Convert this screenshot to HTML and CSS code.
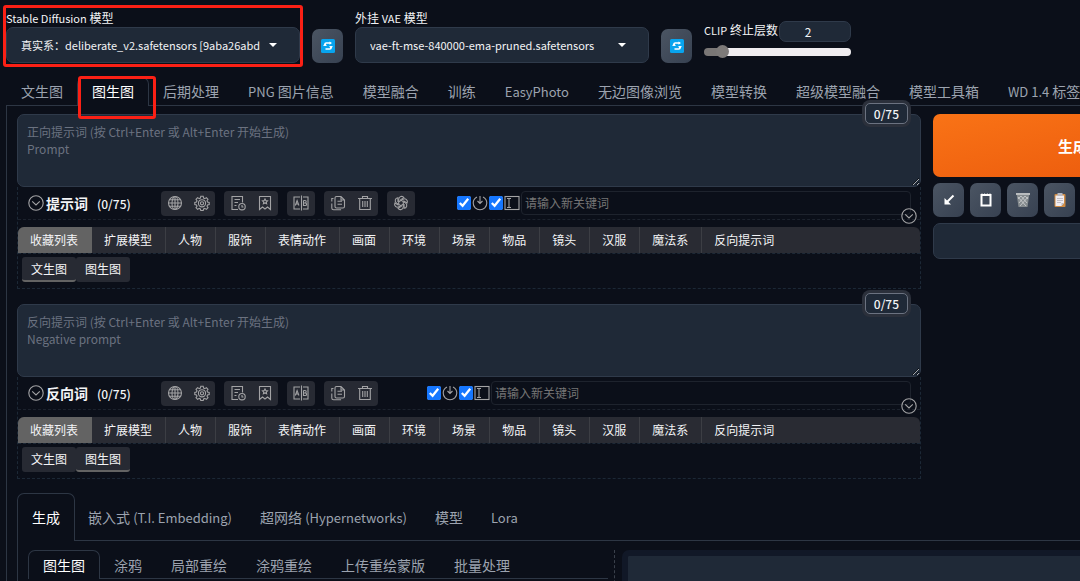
FILE: index.html
```html
<!DOCTYPE html>
<html lang="zh-CN">
<head>
  <meta charset="utf-8">
  <title>Stable Diffusion</title>
  <link rel="stylesheet" href="styles.css">
</head>
<body>
  <!-- shared icons -->
  <svg class="sprite" aria-hidden="true">
    <symbol id="i-refresh" viewBox="0 0 14 14">
      <rect width="14" height="14" rx="1.5" fill="#08a4ee"/>
      <path d="M4 7V5.2Q4 4 5.2 4H9.5M10 7v1.800Q10 10 8.800 10H4.500" fill="none" stroke="#fff" stroke-width="1.600"/>
      <path d="M2 6.800h4L4 4.300zM12 7.200H8l2 2.500zM8.500 2.500v3.200L11 4z" fill="#fff"/>
    </symbol>
    <symbol id="i-chevron" viewBox="0 0 16 16">
      <circle cx="8" cy="8" r="7.200"/><path d="M4.200 6.400 8 10l3.800-3.600"/>
    </symbol>
    <symbol id="i-globe" viewBox="0 0 16 16">
      <circle cx="8" cy="8" r="6.500"/><ellipse cx="8" cy="8" rx="3" ry="6.500"/><path d="M8 1.500v13M1.500 8h13M2.500 4.700h11M2.500 11.300h11"/>
    </symbol>
    <symbol id="i-gear" viewBox="0 0 16 16">
      <path d="M6.800 1.300h2.400l.4 1.800 1.200.5 1.600-1 1.600 1.700-1 1.500.5 1.200 1.700.4v2.200l-1.700.4-.5 1.200 1 1.500-1.600 1.700-1.600-1-1.200.5-.4 1.700H6.800l-.4-1.700-1.200-.5-1.600 1L2 12.700l1-1.500-.5-1.200-1.700-.4V7.400L2.500 7 3 5.800 2 4.300l1.600-1.700 1.600 1 1.200-.5z"/><circle cx="8" cy="8.300" r="3.600"/><circle cx="8" cy="8.300" r="1.600"/>
    </symbol>
    <symbol id="i-history" viewBox="0 0 16 16">
      <path d="M12.500 7.500V1.500H2v13h6M4.500 4.500H10M4.500 7.500H8M4.500 10.500h2"/><circle cx="12" cy="11.700" r="3.200"/><path d="M12 10v2h1.500"/>
    </symbol>
    <symbol id="i-bookmark" viewBox="0 0 16 16">
      <path d="M2.500 1.500h11v13L10.500 12 8 14l-2.500-2-3 2.500z"/><path d="m8 4 .8 1.600 1.700.2-1.300 1.200.4 1.700L8 7.900l-1.600.8.400-1.700-1.300-1.200 1.700-.2z"/>
    </symbol>
    <symbol id="i-translate" viewBox="0 0 16 16">
      <path d="M7 2H1v12h6M8.500 .5v15M10 2h5v12h-5" /><path d="m2.300 10.500 1.800-5 1.800 5M3 9h2.300M10.500 5.500v5h1.800q1.300 0 1.300-1.300 0-1.200-1.300-1.200h-1.800M10.500 5.500H12q1.200 0 1.200 1.200T12 8"/>
    </symbol>
    <symbol id="i-copy" viewBox="0 0 16 16">
      <path d="M6.500 1.500H11L14.500 5v6.500q0 1.500-1.500 1.500H6.500Q5 13 5 11.500V3q0-1.500 1.500-1.500zM7.500 6.300h4.500M7.500 9.300h4.500M11 1.500V5h3.500M3.500 3.500H1.800v3M1.800 8.500v4.500q0 1.800 1.800 1.800h7.500"/>
    </symbol>
    <symbol id="i-trash" viewBox="0 0 16 16">
      <path d="M1 3.500h14M5.500 3.500v-2h5v2M2.700 3.500v11h10.600v-11M5.700 6v6M8 6v6M10.300 6v6"/>
    </symbol>
    <symbol id="i-gpt" viewBox="0 0 16 16">
      <g id="petal"><path d="M5.700 9.300V4.300a2.900 2.900 0 0 1 5.300-1.600L7.300 4.900"/></g>
      <use href="#petal" transform="rotate(60 8 8)"/><use href="#petal" transform="rotate(120 8 8)"/><use href="#petal" transform="rotate(180 8 8)"/><use href="#petal" transform="rotate(240 8 8)"/><use href="#petal" transform="rotate(300 8 8)"/>
    </symbol>
    <symbol id="i-enter" viewBox="0 0 16 16">
      <path d="M5 2Q1.200 4 1.200 8a6.800 6.800 0 0 0 13.600 0Q14.800 4 11 2M8 1v7M5.500 6 8 8.500 10.500 6"/>
    </symbol>
    <symbol id="i-cursor" viewBox="0 0 16 16">
      <rect x="1" y="1.500" width="14" height="13"/><path d="M3 3.500h4M3 12.500h4M5 3.500v9"/>
    </symbol>
  </svg>

  <div class="app">
    <div class="quicksettings">
      <div class="field">
        <label for="checkpoint"><span class="en">Stable Diffusion</span> 模型</label>
        <div class="dropdown">
          <select id="checkpoint"><option>真实系：deliberate_v2.safetensors [9aba26abd</option></select>
          <svg class="arrow" viewBox="0 0 8 4"><path d="M0 0h8L4 4z"/></svg>
        </div>
        <div class="mark mark-model"></div>
      </div>
      <button class="tool" aria-label="refresh"><svg><use href="#i-refresh"/></svg></button>
      <div class="field">
        <label for="vae">外挂 <span class="en">VAE</span> 模型</label>
        <div class="dropdown">
          <select id="vae"><option>vae-ft-mse-840000-ema-pruned.safetensors</option></select>
          <svg class="arrow" viewBox="0 0 8 4"><path d="M0 0h8L4 4z"/></svg>
        </div>
      </div>
      <button class="tool" aria-label="refresh"><svg><use href="#i-refresh"/></svg></button>
      <div class="clip">
        <div class="clip-head">
          <label for="clip"><span class="en">CLIP</span> 终止层数</label>
          <input class="number" id="clip" type="text" value="2">
        </div>
        <input class="range" type="range" min="1" max="12" value="2" aria-label="CLIP">
      </div>
    </div>

    <nav class="tabs main-tabs">
      <button>文生图</button>
      <button class="selected">图生图<span class="mark mark-tab"></span></button>
      <button>后期处理</button>
      <button><span class="en">PNG</span> 图片信息</button>
      <button>模型融合</button>
      <button>训练</button>
      <button><span class="en">EasyPhoto</span></button>
      <button>无边图像浏览</button>
      <button>模型转换</button>
      <button>超级模型融合</button>
      <button>模型工具箱</button>
      <button><span class="en">WD 1.4</span> 标签器</button>
    </nav>

    <main class="panel">
      <div class="top">
        <div class="prompts">
          <section class="prompt">
            <textarea aria-label="提示词" placeholder="正向提示词 (按 Ctrl+Enter 或 Alt+Enter 开始生成)&#10;Prompt"></textarea>
            <span class="counter">0/75</span>
            <div class="editor">
              <div class="toolbar">
                <svg class="icon"><use href="#i-chevron"/></svg>
                <strong>提示词</strong>
                <span class="count">(0/75)</span>
                <div class="groups">
                  <div class="group"><button aria-label="language"><svg class="icon"><use href="#i-globe"/></svg></button><button aria-label="settings"><svg class="icon"><use href="#i-gear"/></svg></button></div>
                  <div class="group"><button aria-label="history"><svg class="icon"><use href="#i-history"/></svg></button><button aria-label="favorite"><svg class="icon"><use href="#i-bookmark"/></svg></button></div>
                  <div class="group"><button aria-label="translate"><svg class="icon"><use href="#i-translate"/></svg></button></div>
                  <div class="group"><button aria-label="copy"><svg class="icon"><use href="#i-copy"/></svg></button><button aria-label="delete"><svg class="icon"><use href="#i-trash"/></svg></button></div>
                  <div class="group"><button aria-label="ChatGPT"><svg class="icon"><use href="#i-gpt"/></svg></button></div>
                </div>
                <label class="check"><input type="checkbox" checked><svg class="icon"><use href="#i-enter"/></svg></label>
                <label class="check"><input type="checkbox" checked><svg class="icon"><use href="#i-cursor"/></svg></label>
                <input class="keyword" type="text" aria-label="关键词" placeholder="请输入新关键词">
              </div>
              <svg class="icon fold"><use href="#i-chevron"/></svg>
              <div class="cats">
                <button class="active">收藏列表</button><button>扩展模型</button><button>人物</button><button>服饰</button><button>表情动作</button><button>画面</button><button>环境</button><button>场景</button><button>物品</button><button>镜头</button><button>汉服</button><button>魔法系</button><button>反向提示词</button>
              </div>
              <div class="subs">
                <button class="active">文生图</button><button>图生图</button>
              </div>
            </div>
          </section>

          <section class="prompt">
            <textarea aria-label="反向词" placeholder="反向提示词 (按 Ctrl+Enter 或 Alt+Enter 开始生成)&#10;Negative prompt"></textarea>
            <span class="counter">0/75</span>
            <div class="editor">
              <div class="toolbar">
                <svg class="icon"><use href="#i-chevron"/></svg>
                <strong>反向词</strong>
                <span class="count">(0/75)</span>
                <div class="groups negative">
                  <div class="group"><button aria-label="language"><svg class="icon"><use href="#i-globe"/></svg></button><button aria-label="settings"><svg class="icon"><use href="#i-gear"/></svg></button></div>
                  <div class="group"><button aria-label="history"><svg class="icon"><use href="#i-history"/></svg></button><button aria-label="favorite"><svg class="icon"><use href="#i-bookmark"/></svg></button></div>
                  <div class="group"><button aria-label="translate"><svg class="icon"><use href="#i-translate"/></svg></button></div>
                  <div class="group"><button aria-label="copy"><svg class="icon"><use href="#i-copy"/></svg></button><button aria-label="delete"><svg class="icon"><use href="#i-trash"/></svg></button></div>
                </div>
                <label class="check"><input type="checkbox" checked><svg class="icon"><use href="#i-enter"/></svg></label>
                <label class="check"><input type="checkbox" checked><svg class="icon"><use href="#i-cursor"/></svg></label>
                <input class="keyword" type="text" aria-label="关键词" placeholder="请输入新关键词">
              </div>
              <svg class="icon fold"><use href="#i-chevron"/></svg>
              <div class="cats">
                <button class="active">收藏列表</button><button>扩展模型</button><button>人物</button><button>服饰</button><button>表情动作</button><button>画面</button><button>环境</button><button>场景</button><button>物品</button><button>镜头</button><button>汉服</button><button>魔法系</button><button>反向提示词</button>
              </div>
              <div class="subs">
                <button>文生图</button><button class="active">图生图</button>
              </div>
            </div>
          </section>
        </div>

        <div class="actions">
          <button class="generate">生成</button>
          <div class="tools">
            <button class="tool" aria-label="paste"><svg viewBox="0 0 14 14"><path d="m11.500 2.500-7 7" stroke="#fff" stroke-width="2"/><path d="M2.500 5v6.500H9z" fill="#fff"/></svg></button>
            <button class="tool" aria-label="clear"><svg viewBox="0 0 14 14"><rect x="2.500" y="2" width="9" height="10.500" fill="none" stroke="#fff" stroke-width="2"/><path d="M3 .5v2M5.600.5v2M8.300.5v2M11 .5v2" stroke="#fff"/></svg></button>
            <button class="tool" aria-label="delete"><svg viewBox="0 0 14 14"><path d="M.5.500h13L11.500 14h-9z" fill="#858b8e"/><path d="M0 1h14" stroke="#b9bcbe" stroke-width="2"/><path d="m2 4 8 9M5 3l6 7M9 3l3 3M12 4l-8 9M9 3l-6 7M5 3 2 6" stroke="#d0d2d3" stroke-width=".8"/></svg></button>
            <button class="tool" aria-label="styles"><svg viewBox="0 0 14 14"><rect x="1.500" y="1" width="11" height="13" rx="1" fill="#d08b43"/><path d="M2.500 2.500h8.500v7.500L8.500 13h-6z" fill="#f1edf0"/><path d="M4.500 0h5v3h-5z" fill="#b8b8c0"/><path d="M4 5.500h6M4 7.500h6M4 9.500h4" stroke="#b8b2bb" stroke-width=".8"/><path d="M11 10H8.500v3z" fill="#b9b9c2"/></svg></button>
          </div>
          <input class="styles" type="text" aria-label="styles">
        </div>
      </div>

      <nav class="tabs sub-tabs">
        <button class="selected">生成</button>
        <button>嵌入式 <span class="en">(T.I. Embedding)</span></button>
        <button>超网络 <span class="en">(Hypernetworks)</span></button>
        <button>模型</button>
        <button><span class="en">Lora</span></button>
      </nav>
      <div class="generation">
        <nav class="tabs mode-tabs">
          <button class="selected">图生图</button>
          <button>涂鸦</button>
          <button>局部重绘</button>
          <button>涂鸦重绘</button>
          <button>上传重绘蒙版</button>
          <button>批量处理</button>
        </nav>
        <div class="gallery"><div class="gallery-view"></div></div>
      </div>
    </main>
  </div>
</body>
</html>
```

FILE: styles.css
```css
* { box-sizing: border-box; }
body {
  margin: 0;
  height: 100vh;
  overflow: hidden;
  background: #0b0f19;
  color: #f3f4f6;
  font-family: "Noto Sans CJK SC", sans-serif;
  font-size: 12px;
  line-height: 17px;
}
button, input, select, textarea {
  margin: 0;
  padding: 0;
  border: 0;
  background: none;
  color: inherit;
  font: inherit;
}
button { cursor: pointer; }
.sprite {
  position: absolute;
  width: 0;
  height: 0;
}
.app { padding: 9px 0 0 6px; }
.icon {
  width: 16px;
  height: 16px;
  flex: none;
  fill: none;
  stroke: #a3a3a5;
  stroke-width: 1.1;
}

/* model settings */
.quicksettings {
  display: flex;
  align-items: flex-end;
  gap: 12px;
}
.quicksettings .en { font-size: 11px; }
.field {
  position: relative;
  width: 294px;
}
.field label { display: block; }
.dropdown {
  display: flex;
  align-items: center;
  height: 36px;
  padding: 0 22px 0 14px;
  border: 1px solid #2f3a4a;
  border-radius: 7px;
  background: #1f2937;
  font-size: 11px;
}
.dropdown select {
  flex: 1;
  min-width: 0;
  margin-right: 7px;
  appearance: none;
  outline: none;
}
.arrow {
  width: 8px;
  height: 4px;
  fill: #fff;
}
.tool {
  display: flex;
  align-items: center;
  justify-content: center;
  width: 31px;
  height: 34px;
  border-radius: 7px;
  background: linear-gradient(to bottom right, #4b5563, #374151);
}
.tool svg {
  width: 14px;
  height: 14px;
}
.clip {
  width: 147px;
  margin-bottom: 5px;
}
.clip-head {
  display: flex;
  align-items: center;
  height: 21px;
  margin-bottom: 4px;
  white-space: nowrap;
}
.clip-head label {
  width: 75px;
  padding-bottom: 3px;
}
.number {
  flex: 1;
  min-width: 0;
  height: 21px;
  padding-right: 14px;
  border: 1px solid #2f3a4a;
  border-radius: 7px;
  background: #1f2937;
  text-align: center;
}
.range {
  display: block;
  width: 100%;
  height: 12px;
  appearance: none;
}
.range::-webkit-slider-runnable-track {
  height: 8px;
  border-radius: 4px;
  background: linear-gradient(to right, #7a7776 12%, #f0edf0 12%);
}
.range::-webkit-slider-thumb {
  width: 13px;
  height: 13px;
  margin-top: -3px;
  border-radius: 50%;
  background: #7d7a79;
  appearance: none;
}

/* red highlight frames */
.mark {
  position: absolute;
  z-index: 2;
  border: 3px solid #fb2015;
  border-radius: 3px;
  pointer-events: none;
}
.mark-model { inset: -4px -3px; }
.mark-tab { inset: -2px -8px -13px 0; }

/* tabs */
.tabs {
  display: flex;
  border-bottom: 1px solid #2d3644;
  white-space: nowrap;
}
.tabs button {
  position: relative;
  flex: none;
  margin: 0 -1px -1px 0;
  padding: 0 14px;
  border: 1px solid transparent;
  border-bottom: 0;
  border-radius: 7px 7px 0 0;
  color: #9ca3af;
  font-size: 14px;
}
.tabs .selected {
  border-color: #2d3644;
  background: #0b0f19;
  color: #fff;
}
.en { font-size: 13px; }
.main-tabs { margin-top: 14px; }
.main-tabs button {
  height: 29px;
  padding-bottom: 2px;
}
.sub-tabs { margin-top: 14px; }
.sub-tabs button {
  height: 48px;
  margin-right: -2px;
}
.mode-tabs { flex: 0 0 580px; }
.mode-tabs button { height: 29px; }

.panel {
  padding: 8px 0 0 10px;
  border-left: 1px solid #2d3644;
}
/* the action column runs past the right edge of the window */
.top {
  display: grid;
  grid-template-columns: minmax(0, 1fr) 280px;
  gap: 12px;
  margin-right: -133px;
}
.prompts {
  display: flex;
  flex-direction: column;
  gap: 15px;
}

/* prompt box */
.prompt { position: relative; }
.prompt textarea {
  display: block;
  width: 100%;
  height: 73px;
  padding: 8px 9px;
  border: 1px solid #2f3a4a;
  border-radius: 7px;
  background: #1f2937;
}
.prompt textarea::placeholder { color: #6b7280; }
.counter {
  position: absolute;
  top: -11px;
  right: 13px;
  height: 21px;
  padding: 1px 8px;
  border: 1px solid #6b7280;
  border-radius: 5px;
  background: #1f2937;
  box-shadow: 0 0 0 3px #2b303b;
  font-weight: 500;
}
.editor {
  position: relative;
  border: 1px dashed #1c2836;
  border-top: 0;
}
.toolbar {
  display: flex;
  align-items: center;
  height: 33px;
  padding: 0 9px 0 10px;
  border-bottom: 1px dashed #1c222d;
}
.toolbar strong {
  margin: 0 9px 0 2px;
  font-size: 14px;
}
.count {
  width: 64px;
  font-weight: 500;
}
.groups {
  display: flex;
  gap: 9px;
  margin-right: 42px;
}
.groups.negative { margin-right: 49px; }
.group {
  display: flex;
  border-radius: 4px;
  background: #272a33;
}
.group button {
  display: flex;
  align-items: center;
  justify-content: center;
  width: 27px;
  height: 25px;
}
.group button:only-child { width: 28px; }
.check {
  display: flex;
  align-items: center;
  gap: 1px;
  margin-right: 1px;
}
.check input {
  width: 14px;
  height: 14px;
  accent-color: #1677ff;
}
.keyword {
  flex: 1;
  min-width: 0;
  height: 24px;
  padding: 0 4px 2px 3px;
  border: 1px solid #1e232d;
  border-radius: 4px;
}
.keyword::placeholder { color: #757575; }
.fold {
  position: absolute;
  top: 21px;
  right: 3px;
}
.cats {
  display: flex;
  height: 26px;
  margin-top: 7px;
  border-radius: 6px 6px 0 0;
  background: #292b33;
  overflow: hidden;
}
.cats button {
  padding: 0 13px 1px 12px;
  border-right: 1px solid #3c3e44;
  white-space: nowrap;
}
.cats button:last-child { border-right: 0; }
.cats .active {
  border-right-color: #636363;
  background: #636363;
}
.subs {
  display: flex;
  height: 35px;
  padding: 3px 4px;
  border-top: 1px dashed #1c2836;
}
.subs button {
  width: 54px;
  height: 25px;
  padding-bottom: 1px;
  border-bottom: 2px solid transparent;
  border-radius: 3px;
  background: #272a33;
}
.subs .active { border-bottom-color: #636363; }

/* right column */
.generate {
  display: block;
  width: 100%;
  height: 63px;
  border-radius: 7px;
  background: linear-gradient(to bottom right, #f97316, #ea580c);
  color: #fff;
  font-size: 15px;
  font-weight: 700;
}
.tools {
  display: flex;
  gap: 6px;
  margin: 6px 0;
}
.styles {
  display: block;
  width: 100%;
  height: 36px;
  border: 1px solid #2f3a4a;
  border-radius: 7px;
  background: #1f2937;
}

/* generation panel */
.generation {
  display: flex;
  align-items: flex-start;
  height: 200px;
  padding: 9px 0 0 10px;
  border-left: 1px solid #2d3644;
}
.gallery {
  flex: 1;
  height: 190px;
  margin-left: 6px;
  padding-left: 7px;
  border-left: 1px dashed #3a404b;
}
.gallery-view {
  height: 190px;
  border: 6px solid #111827;
  border-right: 0;
  border-radius: 7px 0 0 0;
  background: #1f2937;
}
```
